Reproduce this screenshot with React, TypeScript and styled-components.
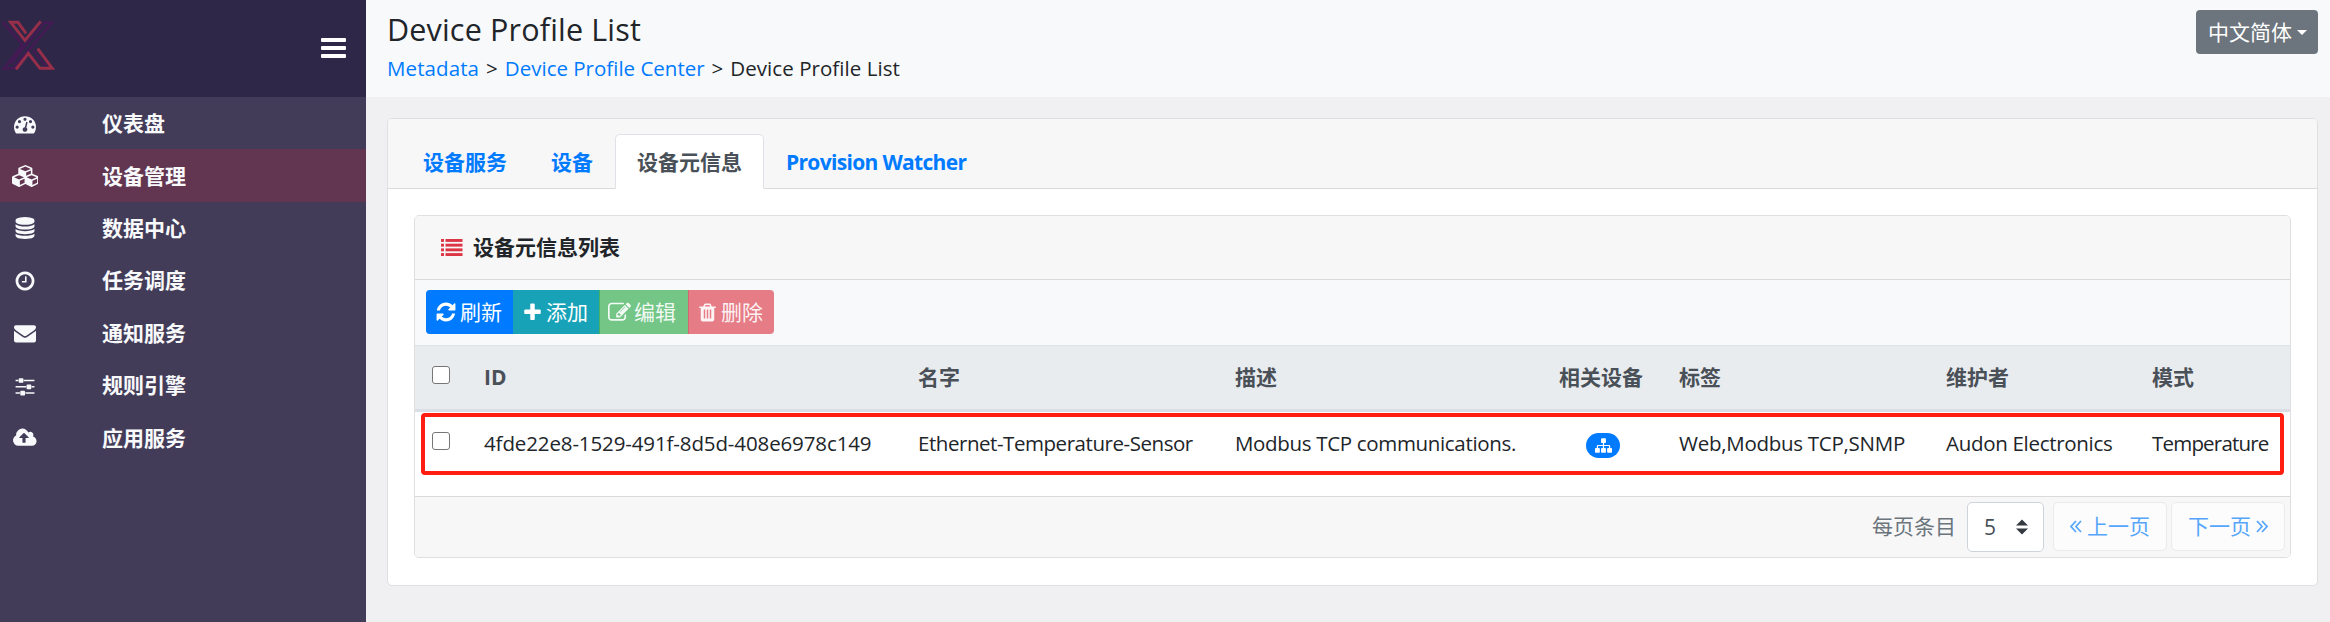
import React from 'react';
import styled, { createGlobalStyle } from 'styled-components';

const GlobalStyle = createGlobalStyle`
  *, *::before, *::after { box-sizing: border-box; }
  body {
    margin: 0;
    background: #f0f0f3;
    color: #212529;
    font-family: 'Open Sans', 'Noto Sans CJK SC', sans-serif;
    font-size: 20.5px;
    line-height: 31px;
  }
`;

/* ---------- icons ---------- */

const ICONS = {
  tachometer: {
    box: '0 0 1792 1792',
    d: 'M384 1152q0-53-37.5-90.5t-90.5-37.5-90.5 37.5-37.5 90.5 37.5 90.5 90.5 37.5 90.5-37.5 37.5-90.5zm192-448q0-53-37.5-90.5t-90.5-37.5-90.5 37.5-37.5 90.5 37.5 90.5 90.5 37.5 90.5-37.5 37.5-90.5zm428 481l101-382q6-26-7.5-48.5t-38.5-29.5-48 6.5-30 39.5l-101 382q-60 5-107 43.5t-63 98.5q-20 77 20 146t117 89 146-20 89-117q16-60-6-117t-72-91zm660-33q0-53-37.5-90.5t-90.5-37.5-90.5 37.5-37.5 90.5 37.5 90.5 90.5 37.5 90.5-37.5 37.5-90.5zm-640-640q0-53-37.5-90.5t-90.5-37.5-90.5 37.5-37.5 90.5 37.5 90.5 90.5 37.5 90.5-37.5 37.5-90.5zm448 192q0-53-37.5-90.5t-90.5-37.5-90.5 37.5-37.5 90.5 37.5 90.5 90.5 37.5 90.5-37.5 37.5-90.5zm320 448q0 261-141 483-19 29-54 29h-1402q-35 0-54-29-141-221-141-483 0-182 71-348t191-286 286-191 348-71 348 71 286 191 191 286 71 348z',
  },
  cubes: {
    box: '0 0 2176 1792',
    d: 'M640 1632l384-192v-314l-384 164v342zm-64-454l404-173-404-173-404 173zm1088 454l384-192v-314l-384 164v342zm-64-454l404-173-404-173-404 173zm-448-293l384-165v-266l-384 164v267zm-64-379l441-189-441-189-441 189zm1088 518v416q0 36-19 67t-52 47l-448 224q-25 14-57 14t-57-14l-448-224q-4-2-7-4-2 2-7 4l-448 224q-25 14-57 14t-57-14l-448-224q-33-16-52-47t-19-67v-416q0-38 21.5-70t56.5-48l434-186v-400q0-38 21.5-70t56.5-48l448-192q23-10 50-10t50 10l448 192q35 16 56.5 48t21.5 70v400l434 186q36 16 57 48t21 70z',
  },
  database: {
    box: '0 0 1792 1792',
    d: 'M896 768q237 0 443-43t325-127v170q0 69-103 128t-280 93.5-385 34.5-385-34.5-280-93.5-103-128v-170q119 84 325 127t443 43zm0 768q237 0 443-43t325-127v170q0 69-103 128t-280 93.5-385 34.5-385-34.5-280-93.5-103-128v-170q119 84 325 127t443 43zm0-384q237 0 443-43t325-127v170q0 69-103 128t-280 93.5-385 34.5-385-34.5-280-93.5-103-128v-170q119 84 325 127t443 43zm0-1152q208 0 385 34.5t280 93.5 103 128v128q0 69-103 128t-280 93.5-385 34.5-385-34.5-280-93.5-103-128v-128q0-69 103-128t280-93.5 385-34.5z',
  },
  clock: {
    box: '0 0 1792 1792',
    d: 'M1024 544v448q0 14-9 23t-23 9h-320q-14 0-23-9t-9-23v-64q0-14 9-23t23-9h224v-352q0-14 9-23t23-9h64q14 0 23 9t9 23zm416 352q0-148-73-273t-198-198-273-73-273 73-198 198-73 273 73 273 198 198 273 73 273-73 198-198 73-273zm224 0q0 209-103 385.5t-279.5 279.5-385.5 103-385.5-103-279.5-279.5-103-385.5 103-385.5 279.5-279.5 385.5-103 385.5 103 279.5 279.5 103 385.5z',
  },
  envelope: {
    box: '0 0 1792 1792',
    d: 'M1792 710v794q0 66-47 113t-113 47h-1472q-66 0-113-47t-47-113v-794q44 49 101 87 362 246 497 345 57 42 92.5 65.5t94.5 48 110 24.5h2q51 0 110-24.5t94.5-48 92.5-65.5q170-123 498-345 57-39 100-87zm0-294q0 79-49 151t-122 123q-376 261-468 325-10 7-42.5 31t-54 38.5-52 32.5-57.5 27-50 9h-2q-23 0-50-9t-57.5-27-52-32.5-54-38.5-42.5-31q-91-64-262-182.5t-205-142.5q-62-42-117-115.5t-55-136.5q0-78 41.5-130t118.5-52h1472q65 0 112.5 47t47.5 113z',
  },
  sliders: {
    box: '0 0 1792 1792',
    d: 'M480 1408v128h-352v-128h352zm352-128q26 0 45 19t19 45v256q0 26-19 45t-45 19h-256q-26 0-45-19t-19-45v-256q0-26 19-45t45-19h256zm160-384v128h-864v-128h864zm-640-512v128h-224v-128h224zm1312 1024v128h-736v-128h736zm-960-1152q26 0 45 19t19 45v256q0 26-19 45t-45 19h-256q-26 0-45-19t-19-45v-256q0-26 19-45t45-19h256zm640 512q26 0 45 19t19 45v256q0 26-19 45t-45 19h-256q-26 0-45-19t-19-45v-256q0-26 19-45t45-19h256zm320 128v128h-224v-128h224zm0-512v128h-864v-128h864z',
  },
  cloudUpload: {
    box: '-64 0 1920 1792',
    d: 'M1216 864q0-14-9-23l-352-352q-9-9-23-9t-23 9l-351 351q-10 12-10 24 0 14 9 23t23 9h224v352q0 13 9.5 22.5t22.5 9.5h192q13 0 22.5-9.5t9.5-22.5v-352h224q13 0 22.5-9.5t9.5-22.5zm640 288q0 159-112.5 271.5t-271.5 112.5h-1088q-185 0-316.5-131.5t-131.5-316.5q0-130 70-240t188-165q-2-30-2-43 0-212 150-362t362-150q156 0 285.5 87t188.5 231q71-62 166-62 106 0 181 75t75 181q0 76-41 138 130 31 213.5 135.5t83.5 238.5z',
  },
  refresh: {
    box: '0 0 1792 1792',
    d: 'M1639 1056q0 5-1 7-64 268-268 434.5t-478 166.5q-146 0-282.5-55t-243.5-157l-129 129q-19 19-45 19t-45-19-19-45v-448q0-26 19-45t45-19h448q26 0 45 19t19 45-19 45l-137 137q71 66 161 102t187 36q134 0 250-65t186-179q11-17 53-117 8-23 30-23h192q13 0 22.5 9.5t9.5 22.5zm25-800v448q0 26-19 45t-45 19h-448q-26 0-45-19t-19-45 19-45l138-138q-148-137-349-137-134 0-250 65t-186 179q-11 17-53 117-8 23-30 23h-199q-13 0-22.5-9.5t-9.5-22.5v-7q65-268 270-434.5t480-166.5q146 0 284 55.5t245 156.5l130-129q19-19 45-19t45 19 19 45z',
  },
  plus: {
    box: '0 0 1792 1792',
    d: 'M1600 736v192q0 40-28 68t-68 28h-416v416q0 40-28 68t-68 28h-192q-40 0-68-28t-28-68v-416h-416q-40 0-68-28t-28-68v-192q0-40 28-68t68-28h416v-416q0-40 28-68t68-28h192q40 0 68 28t28 68v416h416q40 0 68 28t28 68z',
  },
  edit: {
    box: '0 0 1792 1792',
    d: 'M888 1184l116-116-152-152-116 116v56h96v96h56zm440-720q-16-16-33 1l-350 350q-17 17-1 33t33-1l350-350q17-17 1-33zm80 594v190q0 119-84.5 203.5t-203.5 84.5h-832q-119 0-203.5-84.5t-84.5-203.5v-832q0-119 84.5-203.5t203.5-84.5h832q63 0 117 25 15 7 18 23 3 17-9 29l-49 49q-14 14-32 8-23-6-45-6h-832q-66 0-113 47t-47 113v832q0 66 47 113t113 47h832q66 0 113-47t47-113v-126q0-13 9-22l64-64q15-15 35-7t20 29zm-96-738l288 288-672 672h-288v-288zm444 132l-92 92-288-288 92-92q28-28 68-28t68 28l152 152q28 28 28 68t-28 68z',
  },
  trash: {
    box: '0 0 1792 1792',
    d: 'M704 1376v-704q0-14-9-23t-23-9h-64q-14 0-23 9t-9 23v704q0 14 9 23t23 9h64q14 0 23-9t9-23zm256 0v-704q0-14-9-23t-23-9h-64q-14 0-23 9t-9 23v704q0 14 9 23t23 9h64q14 0 23-9t9-23zm256 0v-704q0-14-9-23t-23-9h-64q-14 0-23 9t-9 23v704q0 14 9 23t23 9h64q14 0 23-9t9-23zm-544-992h448l-48-117q-7-9-17-11h-317q-10 2-17 11zm928 32v64q0 14-9 23t-23 9h-96v948q0 83-47 143.5t-113 60.5h-832q-66 0-113-58.5t-47-141.5v-952h-96q-14 0-23-9t-9-23v-64q0-14 9-23t23-9h309l70-167q15-37 54-63t79-26h320q40 0 79 26t54 63l70 167h309q14 0 23 9t9 23z',
  },
  sitemap: {
    box: '0 0 1792 1792',
    d: 'M1792 1248v320q0 40-28 68t-68 28h-320q-40 0-68-28t-28-68v-320q0-40 28-68t68-28h96v-192h-512v192h96q40 0 68 28t28 68v320q0 40-28 68t-68 28h-320q-40 0-68-28t-28-68v-320q0-40 28-68t68-28h96v-192h-512v192h96q40 0 68 28t28 68v320q0 40-28 68t-68 28h-320q-40 0-68-28t-28-68v-320q0-40 28-68t68-28h96v-192q0-52 38-90t90-38h512v-192h-96q-40 0-68-28t-28-68v-320q0-40 28-68t68-28h320q40 0 68 28t28 68v320q0 40-28 68t-68 28h-96v192h512q52 0 90 38t38 90v192h96q40 0 68 28t28 68z',
  },
};

const Svg = styled.svg`
  display: block;
  flex: none;
  fill: currentColor;
`;

function Icon({ name, size = 22 }: { name: keyof typeof ICONS; size?: number }) {
  const { box, d } = ICONS[name];
  const [, , w, h] = box.split(' ').map(Number);
  return (
    <Svg width={(size * w) / h} height={size} viewBox={box}>
      <path d={d} />
    </Svg>
  );
}

const LogoSvg = styled.svg`
  display: block;
  fill: none;
  stroke-width: 9;
`;

function Logo() {
  return (
    <LogoSvg width="55" height="50" viewBox="0 60 165 150">
      <g stroke="#431a54">
        <path d="M8 66 L68 134 L12 205 L40 205 L156 68 L134 68 L77 136 L34 190" strokeWidth="8" />
        <path d="M98 150 L134 194 L142 194" strokeWidth="6" />
      </g>
      <g stroke="#972f4b">
        <path d="M78 100 L54 67 L32 67 L75 121 L122 64" />
        <path d="M48 208 L85 160 L120 205 L157 205 L113 146" />
      </g>
    </LogoSvg>
  );
}

/* ---------- shell ---------- */

const Shell = styled.div`
  display: flex;
  height: 622px;
  overflow: hidden;
`;

const Sidebar = styled.aside`
  flex: none;
  width: 366px;
  background: #433c59;
  color: #f8f9fb;
`;

const Brand = styled.div`
  display: flex;
  align-items: flex-start;
  justify-content: space-between;
  height: 97px;
  padding: 20px 20px 0 0;
  background: #2e2747;
`;

const MenuButton = styled.div`
  display: flex;
  flex-direction: column;
  gap: 4px;
  width: 25px;
  margin-top: 18px;
`;

const MenuBar = styled.span`
  height: 4px;
  border-radius: 1px;
  background: #fff;
`;

const NavItem = styled.div<{ $active?: boolean }>`
  display: flex;
  align-items: center;
  height: 52.4px;
  padding-top: 1px;
  font-size: 21px;
  font-weight: 700;
  background: ${(p) => (p.$active ? '#623551' : 'transparent')};
`;

const NavIcon = styled.span`
  display: flex;
  justify-content: center;
  width: 50px;
  margin-right: 52px;
`;

const Main = styled.main`
  flex: 1;
  min-width: 0;
`;

const PageHeader = styled.header`
  display: flex;
  justify-content: space-between;
  align-items: flex-start;
  height: 97px;
  padding: 10px 12px 0 21px;
  background: #f8f9fb;
`;

const Title = styled.h4`
  margin: 0;
  font-size: 30.5px;
  font-weight: 400;
  line-height: 38px;
  letter-spacing: 0.17px;
`;

const Breadcrumb = styled.div`
  display: flex;
  gap: 7px;
  padding-top: 5px;
`;

const Txt = styled.span<{ $ls?: number }>`
  letter-spacing: ${(p) => p.$ls ?? 0}px;
  white-space: nowrap;
`;

const Crumb = styled(Txt)<{ $link?: boolean }>`
  color: ${(p) => (p.$link ? '#007bff' : '#212529')};
`;

const LangButton = styled.div`
  display: flex;
  align-items: center;
  width: 122px;
  height: 44px;
  padding-left: 12px;
  border-radius: 4px;
  background: #6c757d;
  color: #fff;
  font-size: 21px;
`;

const Caret = styled.span`
  margin-left: 5px;
  border: 5px solid transparent;
  border-top-color: #fff;
  border-bottom: 0;
`;

/* ---------- cards ---------- */

const OuterCard = styled.section`
  height: 468px;
  margin: 21px 12px 0 21px;
  border: 1px solid #dfdfdf;
  border-radius: 5px;
  background: #fff;
`;

const Tabs = styled.nav`
  display: flex;
  height: 70px;
  padding: 15px 0 0 13px;
  border-bottom: 1px solid #dadada;
  border-radius: 4px 4px 0 0;
  background: #f7f7f7;
`;

const Tab = styled.div<{ $active?: boolean }>`
  height: 55px;
  padding: 12px 21px 0;
  border: 1px solid transparent;
  border-radius: 5px 5px 0 0;
  border-color: ${(p) => (p.$active ? '#dee2e6 #dee2e6 #fff' : 'transparent')};
  background: ${(p) => (p.$active ? '#fff' : 'transparent')};
  color: ${(p) => (p.$active ? '#495057' : '#007bff')};
  font-size: 21px;
  font-weight: 700;
  white-space: nowrap;
`;

const InnerCard = styled.section`
  height: 343px;
  margin: 26px 26px 0;
  border: 1px solid #dfdfdf;
  border-radius: 5px;
`;

const CardTitle = styled.div`
  display: flex;
  align-items: center;
  gap: 10px;
  height: 64px;
  padding-left: 26px;
  border-bottom: 1px solid #dadada;
  border-radius: 4px 4px 0 0;
  background: #f7f7f7;
  font-size: 21px;
  font-weight: 700;
`;

const ListSvg = styled.svg`
  display: block;
  margin-bottom: 1px;
  fill: #dc3545;
`;

const Toolbar = styled.div`
  display: flex;
  height: 65px;
  padding: 10px 0 0 11px;
  background: #f8f9fb;
`;

const ToolButton = styled.div<{ $bg: string; $edge: string; $w: number; $dim?: boolean }>`
  display: flex;
  align-items: center;
  gap: 3px;
  width: ${(p) => p.$w}px;
  height: 44px;
  padding-left: 8px;
  border-left: 1px solid ${(p) => p.$edge};
  background: ${(p) => p.$bg};
  color: ${(p) => (p.$dim ? 'rgba(255,255,255,.92)' : '#fff')};
  font-size: 21px;
  &:first-child { border-radius: 4px 0 0 4px; }
  &:last-child { border-radius: 0 4px 4px 0; }
`;

const TableWrap = styled.div`
  position: relative;
  height: 151px;
`;

const Table = styled.table`
  width: 100%;
  table-layout: fixed;
  border-collapse: separate;
  border-spacing: 0;
`;

const Th = styled.th`
  height: 67px;
  padding: 0 0 1px 16px;
  border-top: 1px solid #dee2e6;
  border-bottom: 3px solid #dbdfe5;
  background: #e9ecef;
  color: #495057;
  font-size: 21px;
  font-weight: 700;
  line-height: 31px;
  text-align: left;
`;

const Td = styled.td<{ $center?: boolean }>`
  height: 64px;
  padding: 0 0 2px ${(p) => (p.$center ? 0 : 16)}px;
  white-space: nowrap;
`;

const Check = styled.input`
  display: block;
  appearance: none;
  width: 18px;
  height: 18px;
  margin: 0 0 4px 1px;
  border: 1.5px solid #767676;
  border-radius: 3px;
  background: #fff;
`;

const Badge = styled.span`
  display: flex;
  align-items: center;
  justify-content: center;
  width: 34px;
  height: 25px;
  margin: 5px auto 0;
  border-radius: 13px;
  background: #007bff;
  color: #fff;
`;

const Highlight = styled.div`
  position: absolute;
  top: 68px;
  left: 6px;
  right: 6px;
  height: 62px;
  border: 4px solid #ff1e10;
  border-radius: 4px;
`;

const Footer = styled.div`
  display: flex;
  justify-content: flex-end;
  align-items: flex-start;
  height: 61px;
  padding: 5px 5px 0 0;
  border-top: 1px solid #dadada;
  border-radius: 0 0 4px 4px;
  background: #f7f7f7;
  font-size: 21px;
`;

const FooterLabel = styled.span`
  padding-top: 9px;
  margin-right: 11px;
  color: #6c757d;
`;

const Select = styled.div`
  display: flex;
  align-items: center;
  justify-content: space-between;
  width: 77px;
  height: 50px;
  margin-right: 9px;
  padding: 0 15px 0 16px;
  border: 1px solid #ced4da;
  border-radius: 5px;
  background: #fff;
  color: #495057;
`;

const PageButton = styled.div`
  display: flex;
  align-items: center;
  justify-content: center;
  gap: 5px;
  width: 114px;
  height: 49px;
  border: 1px solid #ebebeb;
  border-radius: 5px;
  background: #fcfcfc;
  color: #55a6fb;
  & + & { margin-left: 4px; }
`;

const Chevrons = styled.svg`
  display: block;
  fill: none;
  stroke: currentColor;
  stroke-width: 1.7;
`;

const NAV: { icon: keyof typeof ICONS; label: string }[] = [
  { icon: 'tachometer', label: '仪表盘' },
  { icon: 'cubes', label: '设备管理' },
  { icon: 'database', label: '数据中心' },
  { icon: 'clock', label: '任务调度' },
  { icon: 'envelope', label: '通知服务' },
  { icon: 'sliders', label: '规则引擎' },
  { icon: 'cloudUpload', label: '应用服务' },
];

const COLUMN_WIDTHS = [53, 434, 317, 324, 120, 267, 206, 154];

export default function App() {
  return (
    <>
      <GlobalStyle />
      <Shell>
        <Sidebar>
          <Brand>
            <Logo />
            <MenuButton><MenuBar /><MenuBar /><MenuBar /></MenuButton>
          </Brand>
          {NAV.map((n, i) => (
            <NavItem key={n.label} $active={i === 1}>
              <NavIcon><Icon name={n.icon} /></NavIcon>
              {n.label}
            </NavItem>
          ))}
        </Sidebar>
        <Main>
          <PageHeader>
            <div>
              <Title>Device Profile List</Title>
              <Breadcrumb>
                <Crumb $link $ls={0.1}>Metadata</Crumb>
                <Crumb>&gt;</Crumb>
                <Crumb $link>Device Profile Center</Crumb>
                <Crumb>&gt;</Crumb>
                <Crumb $ls={0.05}>Device Profile List</Crumb>
              </Breadcrumb>
            </div>
            <LangButton>中文简体<Caret /></LangButton>
          </PageHeader>
          <OuterCard>
            <Tabs>
              <Tab>设备服务</Tab>
              <Tab>设备</Tab>
              <Tab $active>设备元信息</Tab>
              <Tab><Txt $ls={-0.68}>Provision Watcher</Txt></Tab>
            </Tabs>
            <InnerCard>
              <CardTitle>
                <ListSvg width="22" height="17" viewBox="0 0 22 17">
                  {[0, 4.7, 9.4, 14.1].map((y) => (
                    <React.Fragment key={y}>
                      <rect x="0" y={y} width="3" height="2.9" />
                      <rect x="4.5" y={y} width="17" height="2.9" />
                    </React.Fragment>
                  ))}
                </ListSvg>
                设备元信息列表
              </CardTitle>
              <Toolbar>
                <ToolButton $bg="#007bff" $edge="#007bff" $w={87}><Icon name="refresh" />刷新</ToolButton>
                <ToolButton $bg="#17a2b8" $edge="#17a2b8" $w={86}><Icon name="plus" size={21} />添加</ToolButton>
                <ToolButton $bg="#74c687" $edge="#47b163" $w={89} $dim><Icon name="edit" size={23} />编辑</ToolButton>
                <ToolButton $bg="#e67c86" $edge="#cf6873" $w={86} $dim><Icon name="trash" size={21} />删除</ToolButton>
              </Toolbar>
              <TableWrap>
                <Table>
                  <colgroup>
                    {COLUMN_WIDTHS.map((w, i) => <col key={i} width={w} />)}
                  </colgroup>
                  <thead>
                    <tr>
                      <Th><Check type="checkbox" /></Th>
                      <Th>ID</Th>
                      <Th>名字</Th>
                      <Th>描述</Th>
                      <Th>相关设备</Th>
                      <Th>标签</Th>
                      <Th>维护者</Th>
                      <Th>模式</Th>
                    </tr>
                  </thead>
                  <tbody>
                    <tr>
                      <Td><Check type="checkbox" /></Td>
                      <Td><Txt $ls={-0.12}>4fde22e8-1529-491f-8d5d-408e6978c149</Txt></Td>
                      <Td><Txt $ls={-0.45}>Ethernet-Temperature-Sensor</Txt></Td>
                      <Td><Txt $ls={-0.33}>Modbus TCP communications.</Txt></Td>
                      <Td $center><Badge><Icon name="sitemap" size={17} /></Badge></Td>
                      <Td><Txt $ls={-0.27}>Web,Modbus TCP,SNMP</Txt></Td>
                      <Td><Txt $ls={-0.3}>Audon Electronics</Txt></Td>
                      <Td><Txt $ls={-0.8}>Temperature</Txt></Td>
                    </tr>
                  </tbody>
                </Table>
                <Highlight />
              </TableWrap>
              <Footer>
                <FooterLabel>每页条目</FooterLabel>
                <Select>
                  5
                  <svg width="12" height="16" viewBox="0 0 12 16">
                    <path d="M0 6.5 L6 0.5 L12 6.5 Z M0 9.5 L6 15.5 L12 9.5 Z" fill="#343a40" />
                  </svg>
                </Select>
                <PageButton>
                  <Chevrons width="12" height="13" viewBox="0 0 12 13"><path d="M6 1 L1 6.5 L6 12 M11 1 L6 6.5 L11 12" /></Chevrons>
                  上一页
                </PageButton>
                <PageButton>
                  下一页
                  <Chevrons width="12" height="13" viewBox="0 0 12 13"><path d="M1 1 L6 6.5 L1 12 M6 1 L11 6.5 L6 12" /></Chevrons>
                </PageButton>
              </Footer>
            </InnerCard>
          </OuterCard>
        </Main>
      </Shell>
    </>
  );
}
